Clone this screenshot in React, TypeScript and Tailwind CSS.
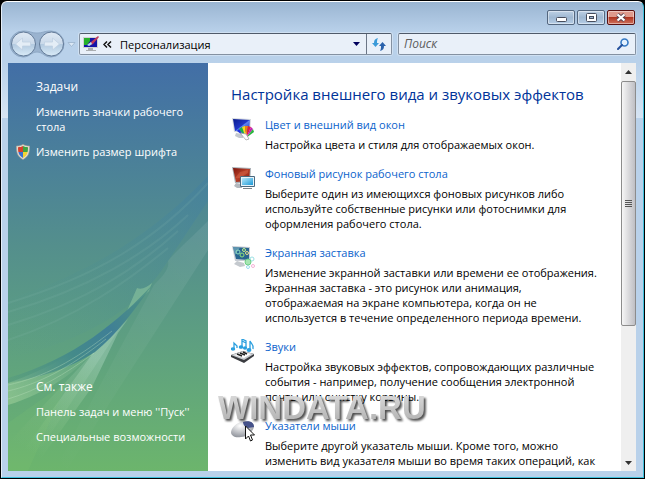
import React from "react";

type Item = { title: string; text: string; icon: React.ReactNode };

const ink = "[font-family:'Open_Sans','Noto_Sans',sans-serif]";

function ColorIcon() {
  return (
    <svg viewBox="0 0 24 24" className="h-6 w-6" aria-hidden="true">
      <defs>
        <linearGradient id="blueScr" x1="0" y1="0" x2="1" y2="1">
          <stop offset="0" stopColor="#0a1c8c" /><stop offset=".5" stopColor="#2036c8" /><stop offset=".55" stopColor="#5d83f2" /><stop offset="1" stopColor="#1226b8" />
        </linearGradient>
      </defs>
      <path d="M5 16l7 1v4l-4 0-4-2z" fill="#c3c8ce" />
      <path d="M1 1l19 1-1 14L3 15z" fill="#d5d9de" />
      <path d="M2 2l17 1-1 12L4 14z" fill="url(#blueScr)" />
      <path d="M15 21L6 14l2-2z" fill="#1f2fe0" /><path d="M15 21L8 12l3-2z" fill="#18b04a" />
      <path d="M15 21L11 10l3-1z" fill="#f5dc18" /><path d="M15 21L14 9l3 0z" fill="#f07c14" />
      <path d="M15 21L17 9l3 1z" fill="#e0203a" /><path d="M15 21L20 10l2 2z" fill="#c81fb4" /><path d="M15 21L22 12l1 3z" fill="#27b53c" />
      <path d="M9 16l6 1 3 5-3 1z" fill="#fff" stroke="#999" strokeWidth=".7" />
    </svg>
  );
}
function WallpaperIcon() {
  return (
    <svg viewBox="0 0 24 24" className="h-6 w-6" aria-hidden="true">
      <defs>
        <linearGradient id="cyanScr" x1="0" y1="0" x2="1" y2="1">
          <stop offset="0" stopColor="#b8e8fa" /><stop offset="1" stopColor="#1c9ad8" />
        </linearGradient>
        <linearGradient id="redScr" x1="0" y1="0" x2="1" y2="1">
          <stop offset="0" stopColor="#7c150c" /><stop offset=".5" stopColor="#b8402a" /><stop offset="1" stopColor="#7a160c" />
        </linearGradient>
      </defs>
      <path d="M5 17l6 1v4l-5 0-3-2z" fill="#b4b9be" />
      <path d="M1 1l19 1-1 15-15 0z" fill="#aab0b6" />
      <path d="M2 2l17 1-1 12-13 1z" fill="url(#redScr)" />
      <path d="M4 12l5-6 8-2v3L9 12z" fill="#d5664a" opacity=".5" />
      <path d="M9.500 10.500h14v10h-14z" fill="#e8f2f8" stroke="#4b6a80" />
      <path d="M11 12h11v7H11z" fill="url(#cyanScr)" />
      <path d="M12 22h9v1h-9z" fill="#7b838a" />
    </svg>
  );
}
function SaverIcon() {
  return (
    <svg viewBox="0 0 24 24" className="h-6 w-6" aria-hidden="true">
      <path d="M6 16l7 2 1 3-5 1-6-3z" fill="#c4c9ce" />
      <path d="M1 1l18 1v14L4 16z" fill="#c8cdd4" />
      <path d="M2 2l16 1v12L5 14z" fill="#286590" />
      <path d="M2 2l7 .5L4 10z" fill="#74a9bd" opacity=".7" />
      <g fill="none" strokeWidth="1">
        <circle cx="7" cy="7" r="2" stroke="#8fe0c0" /><circle cx="13" cy="5" r="1.500" stroke="#c2f08a" />
        <circle cx="11" cy="10" r="2" stroke="#8fe27c" /><circle cx="16" cy="8" r="1.500" stroke="#e6dc8c" />
        <circle cx="21" cy="14" r="2" stroke="#9ae0e4" /><circle cx="22" cy="21" r="1.500" stroke="#f5b3d7" />
        <circle cx="17" cy="22" r="1.500" stroke="#98dcee" />
      </g>
      <circle cx="17" cy="17" r="3" fill="#a6e5b2" stroke="#6ecf86" />
    </svg>
  );
}
function SoundsIcon() {
  return (
    <svg viewBox="0 0 24 24" className="h-6 w-6" aria-hidden="true">
      <path d="M0 16l12-4 11 3v2l-10 7L0 18z" fill="#3a3c40" />
      <path d="M0 16l12-4 11 3-10 6z" fill="#c9ccd0" />
      <path d="M3 16l10-3 7 2-7 4z" fill="#fff" />
      <path d="M6 15l5 2M9 14l5 2M12 13l4 2" stroke="#222" strokeWidth="1.500" />
      <g stroke="#2a9fdf" strokeWidth="1.300" fill="#2a9fdf">
        <path d="M3 10V4l3 3v2" fill="none" /><ellipse cx="2" cy="10" rx="1.600" ry="1.100" />
        <path d="M11 7V0l4 2v7M11 2l4 2" fill="none" /><ellipse cx="10" cy="8" rx="1.600" ry="1.200" /><ellipse cx="14" cy="9" rx="1.400" ry="1" />
        <path d="M19 11V2c1 3 4 3 3 8" fill="none" /><ellipse cx="18" cy="11" rx="1.800" ry="1.300" />
      </g>
    </svg>
  );
}
function MouseIcon() {
  return (
    <svg viewBox="0 0 24 24" className="h-6 w-6 overflow-visible" aria-hidden="true">
      <defs>
        <radialGradient id="mouseBody" cx=".4" cy=".3" r=".8">
          <stop offset="0" stopColor="#fff" /><stop offset="1" stopColor="#82868f" />
        </radialGradient>
      </defs>
      <path d="M0 14C1 8 8 3 15 3c6 0 8 3 8 6-2 6-7 10-13 10-6 1-10-1-10-5z" fill="url(#mouseBody)" />
      <path d="M12 4c6-2 11 0 11 5l-6 1c-3-1-5-3-5-6z" fill="#46528a" />
      <path d="M14.500 8v13l3-3 2 5 2-1-2-5h4z" fill="#fff" stroke="#111" />
    </svg>
  );
}

const items: Item[] = [
  { title: "Цвет и внешний вид окон", text: "Настройка цвета и стиля для отображаемых окон.", icon: <ColorIcon /> },
  { title: "Фоновый рисунок рабочего стола", text: "Выберите один из имеющихся фоновых рисунков либо используйте собственные рисунки или фотоснимки для оформления рабочего стола.", icon: <WallpaperIcon /> },
  { title: "Экранная заставка", text: "Изменение экранной заставки или времени ее отображения. Экранная заставка - это рисунок или анимация, отображаемая на экране компьютера, когда он не используется в течение определенного периода времени.", icon: <SaverIcon /> },
  { title: "Звуки", text: "Настройка звуковых эффектов, сопровождающих различные события - например, получение сообщения электронной почты или очистку корзины.", icon: <SoundsIcon /> },
  { title: "Указатели мыши", text: "Выберите другой указатель мыши. Кроме того, можно изменить вид указателя мыши во время таких операций, как", icon: <MouseIcon /> },
];

function CaptionButtons() {
  const base = "flex h-[15px] w-7 items-center justify-center rounded-xs border shadow-[inset_0_0_0_1px_#ffffff70]";
  const blue = "border-[#54677f] bg-linear-to-b from-[#bdd0e4] via-[#9fb8d2] to-[#b5cde6]";
  return (
    <div className="flex gap-[2px] pr-px">
      <button aria-label="Свернуть" className={`${base} ${blue} items-end pb-[2px]`}>
        <svg viewBox="0 0 11 5" className="h-[5px] w-[11px]"><rect x=".5" y=".5" width="10" height="4" rx="1" fill="#fff" stroke="#474d5c" /></svg>
      </button>
      <button aria-label="Развернуть" className={`${base} ${blue}`}>
        <svg viewBox="0 0 11 9" className="h-[9px] w-[11px]"><rect x=".5" y=".5" width="10" height="8" rx="1" fill="#fff" stroke="#474d5c" /><rect x="3.500" y="3.500" width="4" height="2" fill="#9fb8d2" stroke="#474d5c" /></svg>
      </button>
      <button aria-label="Закрыть" className={`${base} border-[#5a1010] bg-linear-to-b from-[#df9a8c] from-45% via-[#b03520] via-50% to-[#cf705c]`}>
        <svg viewBox="0 0 12 9" className="h-[9px] w-3"><path d="M2.500 1.500l7 6M9.500 1.500l-7 6" stroke="#5a4450" strokeWidth="4" /><path d="M2.500 1.500l7 6M9.500 1.500l-7 6" stroke="#fff" strokeWidth="2.300" /></svg>
      </button>
    </div>
  );
}

function NavButtons() {
  return (
    <svg viewBox="0 0 70 28" className="h-7 w-[70px]" aria-hidden="true">
      <defs>
        <linearGradient id="navDisc" x1="0" y1="0" x2="0" y2="1">
          <stop offset="0" stopColor="#dfe9f4" /><stop offset=".48" stopColor="#cbdaea" /><stop offset=".52" stopColor="#b3cae0" /><stop offset="1" stopColor="#d9ebf8" />
        </linearGradient>
      </defs>
      <path d="M15 1c7 0 8 2 14 2s7-2 14-2a13 13 0 0 1 0 26c-7 0-8-5-14-5s-7 5-14 5A13 13 0 0 1 15 1z" fill="#9ab3cf" stroke="#8fa9c6" />
      <circle cx="15.500" cy="14" r="12" fill="url(#navDisc)" stroke="#627a98" />
      <circle cx="43.500" cy="14" r="12" fill="url(#navDisc)" stroke="#627a98" />
      <path d="M7.500 14l7-6v4h8v4h-8v4z" fill="#e4edf6" stroke="#c0d0e2" strokeWidth=".8" />
      <path d="M51.500 14l-7-6v4h-8v4h8v4z" fill="#e4edf6" stroke="#c0d0e2" strokeWidth=".8" />
      <path d="M60 12.500h7l-3.500 4z" fill="#dce9f6" stroke="#9bb2cb" strokeWidth=".8" />
    </svg>
  );
}

function Aurora() {
  return (
    <svg viewBox="0 0 200 408" preserveAspectRatio="none" className="absolute inset-0 h-full w-full" aria-hidden="true">
      <defs>
        <linearGradient id="ray" x1="1" y1="0" x2="0" y2="1"><stop offset="0" stopColor="#fff" stopOpacity=".08" /><stop offset="1" stopColor="#fff" stopOpacity="0" /></linearGradient>
        <linearGradient id="blade" gradientUnits="userSpaceOnUse" x1="144" y1="221" x2="0" y2="318"><stop offset="0" stopColor="#4a9080" stopOpacity=".7" /><stop offset=".35" stopColor="#3f7f96" /><stop offset=".6" stopColor="#448a8a" /><stop offset="1" stopColor="#4f9580" stopOpacity=".3" /></linearGradient>
        <linearGradient id="band" x1="1" y1="0" x2="0" y2="1"><stop offset="0" stopColor="#437fa0" stopOpacity=".6" /><stop offset=".6" stopColor="#4f9090" stopOpacity=".25" /><stop offset="1" stopColor="#5c9d90" stopOpacity="0" /></linearGradient>
        <linearGradient id="wedge" gradientUnits="userSpaceOnUse" x1="120" y1="255" x2="40" y2="400"><stop offset="0" stopColor="#b5dcc8" stopOpacity=".35" /><stop offset=".3" stopColor="#b5dcc8" stopOpacity=".4" /><stop offset="1" stopColor="#a8d890" stopOpacity="0" /></linearGradient>
        <linearGradient id="fringe" gradientUnits="userSpaceOnUse" x1="90" y1="280" x2="0" y2="330"><stop offset="0" stopColor="#a5d8b0" stopOpacity="0" /><stop offset="1" stopColor="#b8e0a8" stopOpacity=".4" /></linearGradient>
      </defs>
      <path d="M200 113C160 155 100 205 0 236v60c80-20 130-50 160-98l40-60z" fill="url(#band)" />
      <g fill="none" stroke="#8cbdb2" strokeWidth="2" opacity=".14">
        <path d="M200 120C150 175 90 213 0 240" /><path d="M180 152C140 190 80 226 0 249" />
        <path d="M170 168C130 204 80 238 0 262" /><path d="M160 185C120 218 70 254 0 277" />
      </g>
      <path d="M200 158C180 178 168 188 160 198c2 8-6 16-14 24L46 408h12L200 187z" fill="url(#ray)" />
      <path d="M119 245C80 285 40 306 0 320v22c40-12 68-34 85-52z" fill="url(#fringe)" />
      <path d="M129 225c5 2 10-1 15-5l-3 8-22 20z" fill="#8fc9a0" opacity=".55" />
      <path d="M120 256L85 290 18 384l-6 24h12l60-84 26-54z" fill="url(#wedge)" />
      <path d="M112 265L85 290 0 380v28l34-24z" fill="url(#wedge)" opacity=".6" />
      <path d="M145 221C112 257 66 296 0 315v5c34-6 60-14 87-31 22-18 38-40 58-68z" fill="url(#blade)" />
      <g fill="none" stroke="#bfe3c0" opacity=".35"><path d="M104 268C66 298 36 314 0 322" /><path d="M98 276C60 306 30 321 0 328" /><path d="M86 290C56 312 30 327 0 336" /></g>
      <path d="M0 360L60 318 20 408H0z" fill="#8fd070" opacity=".12" />
    </svg>
  );
}

function Shield() {
  return (
    <svg viewBox="0 0 14 16" className="h-4 w-[14px]" aria-hidden="true">
      <path d="M7 .5c2 1 4 1.500 6.500 1.500 0 7-1 10.500-6.500 13.500C1.500 12.500.5 9 .5 2 3 2 5 1.500 7 .5z" fill="#e4ddd0" stroke="#b5a799" strokeWidth=".6" />
      <path d="M7 2C5.500 2.800 4 3.200 2 3.200c0 2 .1 3.200.4 4.800H7z" fill="#d8402c" /><path d="M7 2c1.500.8 3 1.200 5 1.200 0 2-.1 3.200-.4 4.800H7z" fill="#3fa343" />
      <path d="M2.400 8H7v6C4.500 12.500 3 10.800 2.400 8z" fill="#3a6fd0" /><path d="M11.600 8H7v6c2.500-1.500 4-3.200 4.600-6z" fill="#f3d332" />
    </svg>
  );
}

export default function App() {
  return (
    <div className={`h-screen w-full overflow-hidden bg-black p-px text-[11px] leading-[15px] ${ink}`}>
      <div className="relative flex h-full flex-col rounded-t-md border border-t-white border-r-[#3fc0dc] border-b-[#3fc0dc] border-l-[#e5eef8] bg-[linear-gradient(#9ab5d2_0px,#b9d1ea_30px,#b9d1ea_60px,#d6e4f3_116px,#b9d1ea_116px)] pr-[7px] pb-[6px] pl-[6px]">
        <header className="flex h-[61px] shrink-0 flex-col">
          <div className="flex h-7 items-start justify-end pt-2"><CaptionButtons /></div>
          <div className="flex items-center gap-px">
            <NavButtons />
            <div className="flex flex-1 items-center gap-[6px]">
              <div className="flex h-[22px] flex-1 rounded-xs border border-[#8491a1] border-t-[#4f5a6a] bg-[#e9f0f9] shadow-[0_0_0_1px_#cfe0f2]">
                <div className="flex flex-1 items-center gap-1 pl-[3px]">
                  <svg viewBox="0 0 16 16" className="h-4 w-4" aria-hidden="true">
                    <path d="M0 1h15v11H0z" fill="#cfd2d2" /><path d="M1 2h13v9H1z" fill="#1414a8" /><path d="M1 2h6v3L4 9H1z" fill="#25b02c" /><path d="M5 8l3-2 7-6 1 1-6 7-4 2z" fill="#c03a5c" /><path d="M4 9l4-3 1 2-3 2z" fill="#a8e4ff" /><path d="M5 12h5v2h3v1H3v-1h2z" fill="#a9adb0" />
                  </svg>
                  <svg viewBox="0 0 9 7" className="h-[7px] w-[9px]" aria-hidden="true"><path d="M4 .5l-3 3 3 3M8 .5l-3 3 3 3" fill="none" stroke="#111" strokeWidth="1.500" /></svg>
                  <span className="pl-1">Персонализация</span>
                  <button aria-label="Предыдущие расположения" className="mr-[6px] ml-auto"><svg viewBox="0 0 7 4" className="h-1 w-[7px]"><path d="M0 0h7L3.500 4z" fill="#00005c" /></svg></button>
                </div>
                <button aria-label="Обновить" className="flex w-[25px] items-center justify-center border-l border-[#6b7686]">
                  <svg viewBox="0 0 14 13" className="h-[13px] w-[14px]"><path d="M6 0C3 1 2 2 2 5H0l3.500 4L7 5H5C5 3 5 2 6 0z" fill="#3a9ad8" /><path d="M8 13c3-1 4-2 4-5h2l-3.500-4L7 8h2c0 2 0 3-1 5z" fill="#2a62ac" /></svg>
                </button>
              </div>
              <label className="flex h-[22px] w-[238px] items-center rounded-xs border border-[#8491a1] border-t-[#4f5a6a] bg-[#e9f0f9] pr-[6px] pl-[5px] shadow-[0_0_0_1px_#cfe0f2]">
                <input aria-label="Поиск" placeholder="Поиск" className="min-w-0 flex-1 bg-transparent text-xs italic outline-none placeholder:text-[#5c5c5c]" />
                <svg viewBox="0 0 12 12" className="h-3 w-3" aria-hidden="true"><circle cx="7.500" cy="4.500" r="3.500" fill="#e3f1ff" stroke="#3579c4" strokeWidth="1.600" /><path d="M5 7L1 11" stroke="#24509c" strokeWidth="2" strokeLinecap="round" /></svg>
              </label>
            </div>
          </div>
        </header>
        <div className="flex min-h-0 flex-1">
          <nav className="relative flex w-[200px] shrink-0 flex-col overflow-hidden bg-linear-to-b from-[#426ea6] via-[#548f8c] via-45% to-[#6cb56c] pt-4 text-white">
            <Aurora />
            <div className="relative flex flex-1 flex-col gap-[10px] pb-[27px] pl-7">
              <h2 className="text-xs leading-[15px]">Задачи</h2>
              <a href="#icons" className="w-[165px]">Изменить значки рабочего стола</a>
              <div className="-ml-5 flex h-[15px] items-center gap-[6px]"><Shield /><a href="#font">Изменить размер шрифта</a></div>
              <h2 className="mt-auto text-xs leading-[15px]">См. также</h2>
              <a href="#taskbar" className="whitespace-nowrap">Панель задач и меню ''Пуск''</a>
              <a href="#access">Специальные возможности</a>
            </div>
          </nav>
          <main id="content" className="min-w-0 flex-1 overflow-hidden bg-white pt-5 pl-[23px]">
            <h1 className="mb-3 text-[15px] leading-[22px] whitespace-nowrap text-[#003399]">Настройка внешнего вида и звуковых эффектов</h1>
            <ul className="flex flex-col gap-[14px] pr-5">
              {items.map((it) => (
                <li key={it.title} className="flex gap-[10px]">
                  <span className="shrink-0">{it.icon}</span>
                  <div className="min-w-0 flex-1">
                    <a href="#item" className="block text-[#0b63cc]">{it.title}</a>
                    <p className="mt-[5px] text-black">{it.text}</p>
                  </div>
                </li>
              ))}
            </ul>
          </main>
          <div role="scrollbar" aria-controls="content" aria-valuenow={0} className="flex w-[15px] shrink-0 flex-col items-center bg-[#efefef]">
            <button aria-label="Вверх" className="flex h-[18px] items-center"><svg viewBox="0 0 7 4" className="h-1 w-[7px]"><path d="M0 4h7L3.500 0z" fill="#333" /></svg></button>
            <div className="flex h-[245px] w-full flex-col items-center justify-center gap-px rounded-xs border border-[#8c8c8c] bg-linear-to-r from-[#f6f6f6] to-[#bfbfc4]">
              <i className="h-px w-[7px] bg-[#555]" /><i className="h-px w-[7px] bg-[#555]" /><i className="h-px w-[7px] bg-[#555]" /><i className="h-px w-[7px] bg-[#555]" />
            </div>
            <button aria-label="Вниз" className="mt-auto flex h-4 items-center"><svg viewBox="0 0 7 4" className="h-1 w-[7px]"><path d="M0 0h7L3.500 4z" fill="#333" /></svg></button>
          </div>
        </div>
        <div className="pointer-events-none absolute top-[386px] left-[216px] bg-linear-to-b from-[#e2e2e2] to-[#aaaaaa] bg-clip-text text-[33px] leading-10 font-bold text-transparent drop-shadow-[2px_2px_1px_#000000b0] [font-family:'Liberation_Sans',Arial,sans-serif]">WINDATA.RU</div>
      </div>
    </div>
  );
}
